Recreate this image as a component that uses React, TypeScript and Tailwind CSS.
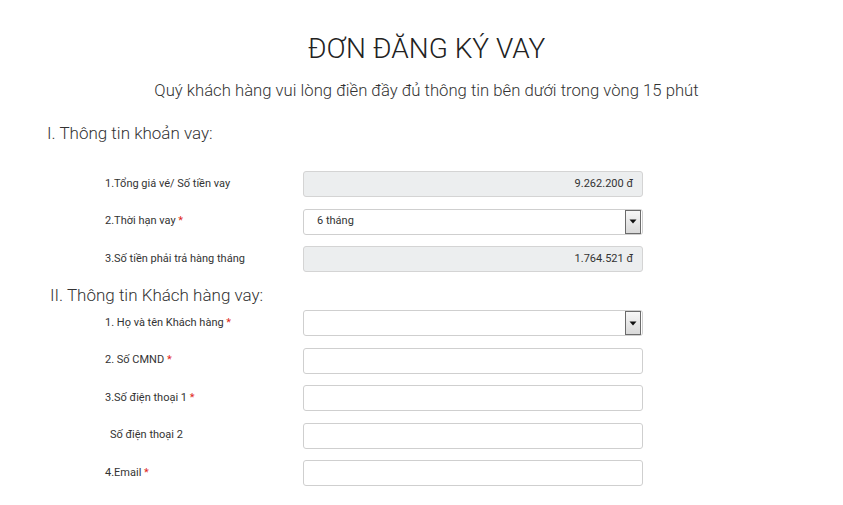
import React from 'react';

type Row = {
  label: string;
  required?: boolean;
  kind: 'readonly' | 'select' | 'text';
  value?: string;
  indent?: boolean;
};

const LOAN_ROWS: Row[] = [
  { label: '1.Tổng giá vé/ Số tiền vay', kind: 'readonly', value: '9.262.200 đ' },
  { label: '2.Thời hạn vay', required: true, kind: 'select', value: '6 tháng' },
  { label: '3.Số tiền phải trả hàng tháng', kind: 'readonly', value: '1.764.521 đ' },
];

const CUSTOMER_ROWS: Row[] = [
  { label: '1. Họ và tên Khách hàng', required: true, kind: 'select', value: '' },
  { label: '2. Số CMND', required: true, kind: 'text' },
  { label: '3.Số điện thoại 1', required: true, kind: 'text' },
  { label: 'Số điện thoại 2', kind: 'text', indent: true },
  { label: '4.Email', required: true, kind: 'text' },
];

function Field({ row }: { row: Row }) {
  if (row.kind === 'readonly') {
    return (
      <div className="flex h-[26px] w-[340px] items-center justify-end rounded-[3px] border border-[#d4d4d4] bg-[#eceeef] pr-[9px] text-[11px] text-[#333]">
        {row.value}
      </div>
    );
  }
  if (row.kind === 'select') {
    return (
      <div className="flex h-[26px] w-[340px] items-center rounded-[3px] border border-[#cfcfcf] bg-white pl-[13px] text-[11px] text-[#333]">
        <span className="flex-1">{row.value}</span>
        <span className="mr-[1px] flex h-[24px] w-[16px] items-center justify-center border border-[#6b6b6b] bg-gradient-to-b from-[#f7f7f7] to-[#d9d9d9]">
          <svg width="8" height="5" viewBox="0 0 8 5">
            <path d="M0.5 0.5 L7.5 0.5 L4 4.5 Z" fill="#111" />
          </svg>
        </span>
      </div>
    );
  }
  return <div className="h-[26px] w-[340px] rounded-[3px] border border-[#cfcfcf] bg-white" />;
}

function FormRow({ row }: { row: Row }) {
  return (
    <div className="flex h-[26px] items-center">
      <div className={`w-[303px] shrink-0 text-[11px] text-[#333] ${row.indent ? 'pl-[110px]' : 'pl-[105px]'}`}>
        {row.label}
        {row.required && <span className="text-[#e0281c]"> *</span>}
      </div>
      <Field row={row} />
    </div>
  );
}

export default function App() {
  return (
    <div
      className="h-[505px] w-[843px] overflow-hidden bg-white text-[#333]"
      style={{ fontFamily: 'Roboto, "Liberation Sans", sans-serif' }}
    >
      {/* heading block sits a little right of the page centre */}
      <div className="pl-[10px] text-center">
        <h1 className="mt-[31px] text-[28px] font-light leading-[36px] text-[#222]">
          ĐƠN ĐĂNG KÝ VAY
        </h1>
        <p className="mt-[12px] text-[16.7px] font-light leading-[24px] text-[#333]">
          Quý khách hàng vui lòng điền đầy đủ thông tin bên dưới trong vòng 15 phút
        </p>
      </div>

      <h2 className="mt-[17px] pl-[47px] text-[17px] font-light leading-[26px] text-[#333]">
        I. Thông tin khoản vay:
      </h2>
      <div className="mt-[25px] flex flex-col gap-[11.5px]">
        {LOAN_ROWS.map((r) => (
          <FormRow key={r.label} row={r} />
        ))}
      </div>

      <h2 className="mt-[10px] pl-[50px] text-[17px] font-light leading-[26px] text-[#333]">
        II. Thông tin Khách hàng vay:
      </h2>
      <div className="mt-[2px] flex flex-col gap-[11.5px]">
        {CUSTOMER_ROWS.map((r) => (
          <FormRow key={r.label} row={r} />
        ))}
      </div>
    </div>
  );
}
